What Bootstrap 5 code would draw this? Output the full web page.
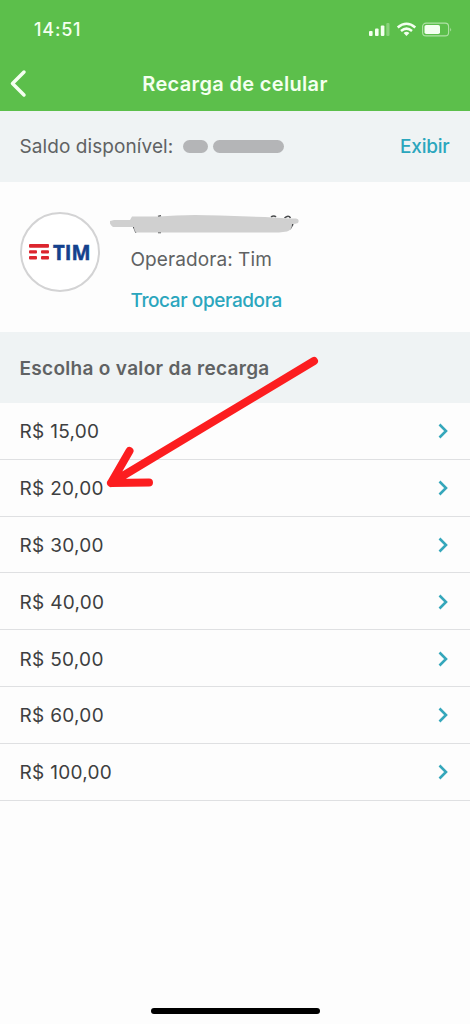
<!DOCTYPE html>
<html lang="pt-BR">
<head>
<meta charset="utf-8">
<meta name="viewport" content="width=device-width, initial-scale=1">
<title>Recarga de celular</title>
<link href="https://cdn.jsdelivr.net/npm/bootstrap@5.3.0/dist/css/bootstrap.min.css" rel="stylesheet">
<style>
body{font-family:Inter,"Liberation Sans",sans-serif;font-size:19px;line-height:24px;color:#606263;background:#fdfdfd}
.screen{height:1024px;overflow:hidden}
.app-head{height:111px;background:#5cbf4b;color:#f4fff0}
.status{height:57px;padding:2px 17px 0 34px}
.clock{font-size:18px;font-weight:500;letter-spacing:.8px}
.title-bar{height:54px}
.title-bar h1{font-size:20px;line-height:24px;font-weight:600;letter-spacing:.33px}
.back{left:9px;top:12px}
.band{background:#eff3f4;height:71px;padding:0 20px 0 19.5px}
.action{color:#2ba6bd;font-weight:500;text-decoration:none}
.operator{height:150px;padding:30px 20px 0 19.5px}
.brand{width:80px;height:80px;border:2px solid #d3d3d4;background:#fff}
.details{padding-left:31px}
.scribble{left:-21px;top:0}
.t-op{margin-top:12px;letter-spacing:.08px}
.t-tr{margin-top:17px;letter-spacing:-.4px}
.t-ex{letter-spacing:-.2px;margin-right:.5px}
.t-bal{letter-spacing:.08px}
.t-sec{font-size:19px;font-weight:600;letter-spacing:.31px;padding-top:3px}
.amount{height:56.8px;padding:3px 21px 0 19.5px;border-bottom:1px solid #dfe0e2;color:#3e3f41;text-decoration:none;letter-spacing:.3px}
.amount svg{margin-top:-2px}
.pointer{left:100px;top:350px;pointer-events:none}
.home-bar{width:169px;height:6px;background:#000;margin-bottom:10.5px}
</style>
</head>
<body>
<main class="screen d-flex flex-column position-relative">
  <header class="app-head">
    <div class="status d-flex align-items-center justify-content-between">
      <span class="clock">14:51</span>
      <svg width="84" height="16" viewBox="0 0 84 16" fill="#f4fff0">
        <rect x="0" y="9" width="3.6" height="5" rx="1"/><rect x="6" y="6.5" width="3.6" height="7.5" rx="1"/><rect x="11.8" y="3.5" width="3.6" height="10.5" rx="1"/><rect x="17.3" y="1" width="3.2" height="13" rx="1" opacity=".3"/>
        <g fill="none" stroke="#f4fff0" stroke-width="2.5"><path d="M28.7 5.5Q37.5-2 46.300 5.500"/><path d="M32 9Q37.500 4.300 43 9"/></g>
        <path d="M34.600 11Q37.500 8.700 40.400 11L37.500 14Z"/>
        <rect x="53.600" y="1.100" width="26" height="12.800" rx="3.500" fill="none" stroke="#f4fff0" stroke-opacity=".55" stroke-width="1.100"/>
        <rect x="55.500" y="3" width="15.500" height="9" rx="1.800"/><path d="M81.200 5.500q1.800 2 0 4z" opacity=".55"/>
      </svg>
    </div>
    <div class="title-bar d-flex align-items-center justify-content-center position-relative">
      <svg class="back position-absolute" width="18" height="30" viewBox="0 0 18 30"><path d="M15 3 3.500 14.500 15 26" fill="none" stroke="#f4fff0" stroke-width="3.500" stroke-linecap="round" stroke-linejoin="round"/></svg>
      <h1 class="mb-0"><span>Recarga de celular</span></h1>
    </div>
  </header>
  <section class="band d-flex align-items-center">
    <span class="t-bal">Saldo disponível:</span>
    <svg class="ms-2" width="104" height="13" viewBox="0 0 104 13" fill="#b4b5b7"><rect x="2" width="25" height="13" rx="6.500"/><rect x="32" width="71" height="13" rx="6.500"/></svg>
    <a class="action t-ex ms-auto" href="#">Exibir</a>
  </section>
  <section class="operator d-flex">
    <div class="brand rounded-circle flex-shrink-0 d-flex align-items-center justify-content-center">
      <svg width="70" height="30" viewBox="-3 -4 70 30"><g fill="#dc252e"><rect x="1" y="3" width="20" height="3.800" rx="1"/><rect x="1" y="9.300" width="8" height="3.200" rx="1"/><rect x="13" y="9.300" width="8" height="3.200" rx="1"/><rect x="1" y="15" width="8" height="3.500" rx="1"/><rect x="13" y="15" width="8" height="3.500" rx="1"/></g><text x="25" y="18.500" font-family="Open Sans, sans-serif" font-size="21" font-weight="700" textLength="37.500" lengthAdjust="spacingAndGlyphs" fill="#14418d" stroke="#14418d" stroke-width=".5">TIM</text></svg>
    </div>
    <div class="details d-flex flex-column">
      <svg class="scribble position-relative" width="192" height="24" viewBox="0 0 192 24">
        <path d="M24 8 22.500 12 26 20.500M48 4.500l3-.8M48 20.500l3 0M161 5q3-2 5 0M174.500 6q4-3.500 6 0M180 17l3-5" stroke="#4a4c4e" stroke-width="1.600" fill="none"/>
        <path d="M4 8H20L22 4.500H49Q75 2 110 3.500L155 5 179 6.500H186Q190 7 188 11 186 12 182 12 182 18 177 19.500L169 20.500H27Q24 20 24 15L3 15Q-1 12 0 9Z" fill="#d0d0d0"/>
      </svg>
      <span class="t-op">Operadora: Tim</span>
      <a class="action t-tr" href="#">Trocar operadora</a>
    </div>
  </section>
  <h2 class="band t-sec d-flex align-items-center mb-0"><span>Escolha o valor da recarga</span></h2>
  <nav class="amounts" aria-label="Valores">
    <a class="amount d-flex align-items-center justify-content-between" href="#"><span>R$ 15,00</span><svg width="12" height="18" viewBox="0 0 12 18"><path d="m2.500 2.500 6.500 6.500-6.500 6.500" fill="none" stroke="#35a7bb" stroke-width="2.600"/></svg></a>
    <a class="amount d-flex align-items-center justify-content-between" href="#"><span>R$ 20,00</span><svg width="12" height="18" viewBox="0 0 12 18"><path d="m2.500 2.500 6.500 6.500-6.500 6.500" fill="none" stroke="#35a7bb" stroke-width="2.600"/></svg></a>
    <a class="amount d-flex align-items-center justify-content-between" href="#"><span>R$ 30,00</span><svg width="12" height="18" viewBox="0 0 12 18"><path d="m2.500 2.500 6.500 6.500-6.500 6.500" fill="none" stroke="#35a7bb" stroke-width="2.600"/></svg></a>
    <a class="amount d-flex align-items-center justify-content-between" href="#"><span>R$ 40,00</span><svg width="12" height="18" viewBox="0 0 12 18"><path d="m2.500 2.500 6.500 6.500-6.500 6.500" fill="none" stroke="#35a7bb" stroke-width="2.600"/></svg></a>
    <a class="amount d-flex align-items-center justify-content-between" href="#"><span>R$ 50,00</span><svg width="12" height="18" viewBox="0 0 12 18"><path d="m2.500 2.500 6.500 6.500-6.500 6.500" fill="none" stroke="#35a7bb" stroke-width="2.600"/></svg></a>
    <a class="amount d-flex align-items-center justify-content-between" href="#"><span>R$ 60,00</span><svg width="12" height="18" viewBox="0 0 12 18"><path d="m2.500 2.500 6.500 6.500-6.500 6.500" fill="none" stroke="#35a7bb" stroke-width="2.600"/></svg></a>
    <a class="amount d-flex align-items-center justify-content-between" href="#"><span>R$ 100,00</span><svg width="12" height="18" viewBox="0 0 12 18"><path d="m2.500 2.500 6.500 6.500-6.500 6.500" fill="none" stroke="#35a7bb" stroke-width="2.600"/></svg></a>
  </nav>
  <div class="home-bar rounded-pill mt-auto mx-auto"></div>
  <svg class="pointer position-absolute" width="225" height="145" viewBox="0 0 225 145"><path d="M214 11 11 133M29.500 101 11 133 49 132.500" fill="none" stroke="#fc1d1f" stroke-width="8" stroke-linecap="round" stroke-linejoin="round"/></svg>
</main>
<script src="https://cdn.jsdelivr.net/npm/bootstrap@5.3.0/dist/js/bootstrap.bundle.min.js"></script>
</body>
</html>
